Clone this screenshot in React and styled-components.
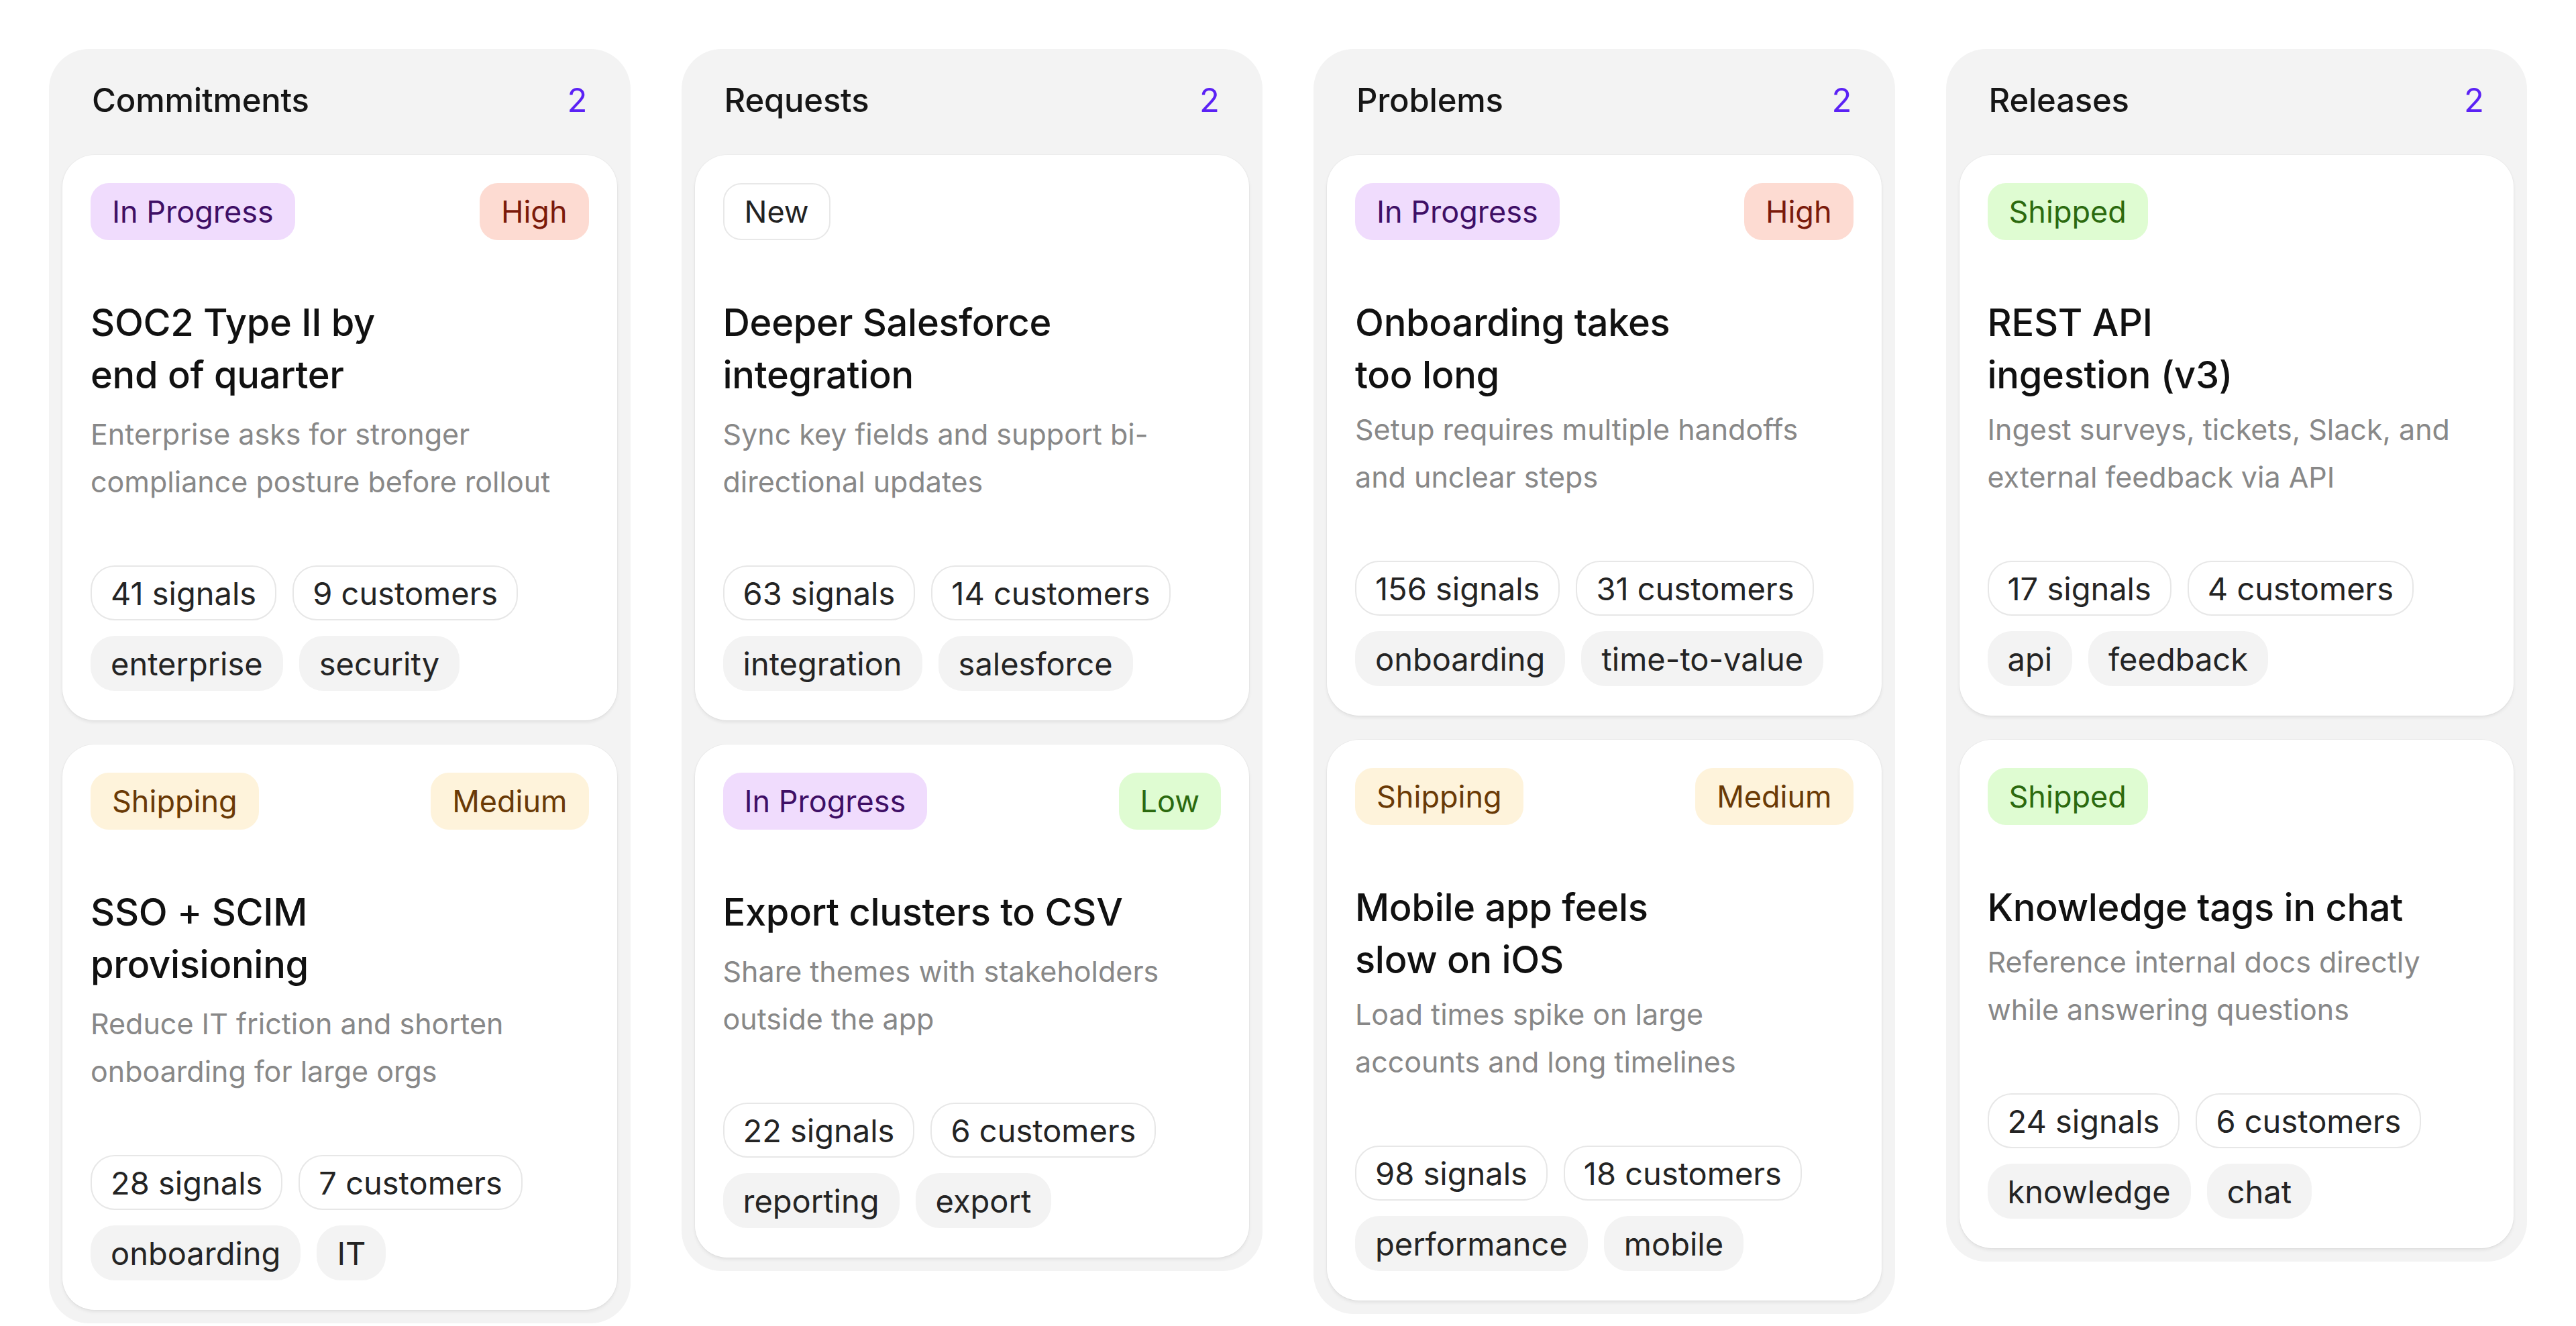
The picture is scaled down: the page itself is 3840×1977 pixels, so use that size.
import React from 'react';
import styled, { createGlobalStyle } from 'styled-components';

const GlobalStyle = createGlobalStyle`
  * {
    box-sizing: border-box;
  }

  body {
    margin: 0;
    background: #ffffff;
    font-family: Inter, "Noto Sans", "Liberation Sans", sans-serif;
    -webkit-font-smoothing: antialiased;
  }
`;

const Board = styled.div`
  display: grid;
  grid-template-columns: repeat(4, 1fr);
  gap: 76px;
  align-items: start;
  padding: 73px;
`;

const Column = styled.section`
  display: flex;
  flex-direction: column;
  background: #f3f3f3;
  border-radius: 60px;
  padding: 20px;
`;

const ColumnHeader = styled.div`
  display: flex;
  align-items: center;
  justify-content: space-between;
  height: 112px;
  padding: 0 44px;
  margin-bottom: 26px;
`;

const ColumnTitle = styled.h2`
  margin: 0;
  font-size: 49px;
  font-weight: 500;
  color: #161616;
  letter-spacing: -0.2px;
`;

const ColumnCount = styled.span`
  font-size: 49px;
  font-weight: 400;
  color: #5b21f5;
`;

const CardList = styled.div`
  display: flex;
  flex-direction: column;
  gap: 36px;
`;

const Card = styled.article`
  background: #ffffff;
  border-radius: 48px;
  padding: 42px 42px 44px;
  box-shadow: 0 3px 5px rgba(0, 0, 0, 0.07), 0 0 0 1px rgba(0, 0, 0, 0.025);
`;

const BadgeRow = styled.div`
  display: flex;
  align-items: center;
  justify-content: space-between;
`;

const badgeTones = {
  progress: { bg: '#f0dcfd', fg: '#3f0f66', border: '#f0dcfd' },
  high: { bg: '#fddbd2', fg: '#7b1a0b', border: '#fddbd2' },
  shipping: { bg: '#fef3db', fg: '#6a3a06', border: '#fef3db' },
  shipped: { bg: '#dffcd2', fg: '#2c6a0f', border: '#dffcd2' },
  fresh: { bg: '#ffffff', fg: '#222222', border: '#e8e8e8' },
};

const Badge = styled.span`
  display: inline-flex;
  align-items: center;
  height: 85px;
  padding: 0 30px;
  border-radius: 27px;
  border: 2px solid ${p => badgeTones[p.$tone].border};
  background: ${p => badgeTones[p.$tone].bg};
  color: ${p => badgeTones[p.$tone].fg};
  font-size: 45px;
  font-weight: 400;
  white-space: nowrap;
`;

const Title = styled.h3`
  margin: 84px 0 0;
  font-size: 56px;
  line-height: 78px;
  font-weight: 500;
  color: #111111;
  letter-spacing: -0.3px;
`;

const Line = styled.span`
  display: block;
  white-space: nowrap;
`;

const Description = styled.p`
  margin: ${p => p.$gap}px 0 0;
  font-size: 43px;
  line-height: 71px;
  color: #888888;
`;

const ChipRow = styled.div`
  display: flex;
  flex-wrap: wrap;
  gap: 24px;
  margin-top: ${p => (p.$first ? '89px' : '23px')};
`;

const Chip = styled.span`
  display: inline-flex;
  align-items: center;
  height: 82px;
  padding: 0 28px;
  border-radius: 36px;
  border: 2px solid ${p => (p.$tag ? '#f3f3f3' : '#e7e7e7')};
  background: ${p => (p.$tag ? '#f3f3f3' : '#ffffff')};
  color: #242424;
  font-size: 47px;
  white-space: nowrap;
`;

const columns = [
  {
    name: 'Commitments',
    descGap: 14,
    items: [
      {
        status: ['In Progress', 'progress'],
        priority: ['High', 'high'],
        title: ['SOC2 Type II by', 'end of quarter'],
        desc: ['Enterprise asks for stronger', 'compliance posture before rollout'],
        signals: 41,
        customers: 9,
        tags: ['enterprise', 'security'],
      },
      {
        status: ['Shipping', 'shipping'],
        priority: ['Medium', 'shipping'],
        title: ['SSO + SCIM', 'provisioning'],
        desc: ['Reduce IT friction and shorten', 'onboarding for large orgs'],
        signals: 28,
        customers: 7,
        tags: ['onboarding', 'IT'],
      },
    ],
  },
  {
    name: 'Requests',
    descGap: 14,
    items: [
      {
        status: ['New', 'fresh'],
        title: ['Deeper Salesforce', 'integration'],
        desc: ['Sync key fields and support bi-', 'directional updates'],
        signals: 63,
        customers: 14,
        tags: ['integration', 'salesforce'],
      },
      {
        status: ['In Progress', 'progress'],
        priority: ['Low', 'shipped'],
        title: ['Export clusters to CSV'],
        desc: ['Share themes with stakeholders', 'outside the app'],
        signals: 22,
        customers: 6,
        tags: ['reporting', 'export'],
      },
    ],
  },
  {
    name: 'Problems',
    descGap: 7,
    items: [
      {
        status: ['In Progress', 'progress'],
        priority: ['High', 'high'],
        title: ['Onboarding takes', 'too long'],
        desc: ['Setup requires multiple handoffs', 'and unclear steps'],
        signals: 156,
        customers: 31,
        tags: ['onboarding', 'time-to-value'],
      },
      {
        status: ['Shipping', 'shipping'],
        priority: ['Medium', 'shipping'],
        title: ['Mobile app feels', 'slow on iOS'],
        desc: ['Load times spike on large', 'accounts and long timelines'],
        signals: 98,
        customers: 18,
        tags: ['performance', 'mobile'],
      },
    ],
  },
  {
    name: 'Releases',
    descGap: 7,
    items: [
      {
        status: ['Shipped', 'shipped'],
        title: ['REST API', 'ingestion (v3)'],
        desc: ['Ingest surveys, tickets, Slack, and', 'external feedback via API'],
        signals: 17,
        customers: 4,
        tags: ['api', 'feedback'],
      },
      {
        status: ['Shipped', 'shipped'],
        title: ['Knowledge tags in chat'],
        desc: ['Reference internal docs directly', 'while answering questions'],
        signals: 24,
        customers: 6,
        tags: ['knowledge', 'chat'],
      },
    ],
  },
];

const ItemCard = ({ item, descGap }) => (
  <Card>
    <BadgeRow>
      <Badge $tone={item.status[1]}>{item.status[0]}</Badge>
      {item.priority && <Badge $tone={item.priority[1]}>{item.priority[0]}</Badge>}
    </BadgeRow>
    <Title>
      {item.title.map(line => (
        <Line key={line}>{line}</Line>
      ))}
    </Title>
    <Description $gap={descGap}>
      {item.desc.map(line => (
        <Line key={line}>{line}</Line>
      ))}
    </Description>
    <ChipRow $first>
      <Chip>{item.signals} signals</Chip>
      <Chip>{item.customers} customers</Chip>
    </ChipRow>
    <ChipRow>
      {item.tags.map(tag => (
        <Chip key={tag} $tag>
          {tag}
        </Chip>
      ))}
    </ChipRow>
  </Card>
);

const App = () => (
  <>
    <GlobalStyle />
    <Board>
      {columns.map(col => (
        <Column key={col.name}>
          <ColumnHeader>
            <ColumnTitle>{col.name}</ColumnTitle>
            <ColumnCount>{col.items.length}</ColumnCount>
          </ColumnHeader>
          <CardList>
            {col.items.map(item => (
              <ItemCard key={item.title.join(' ')} item={item} descGap={col.descGap} />
            ))}
          </CardList>
        </Column>
      ))}
    </Board>
  </>
);

export default App;
